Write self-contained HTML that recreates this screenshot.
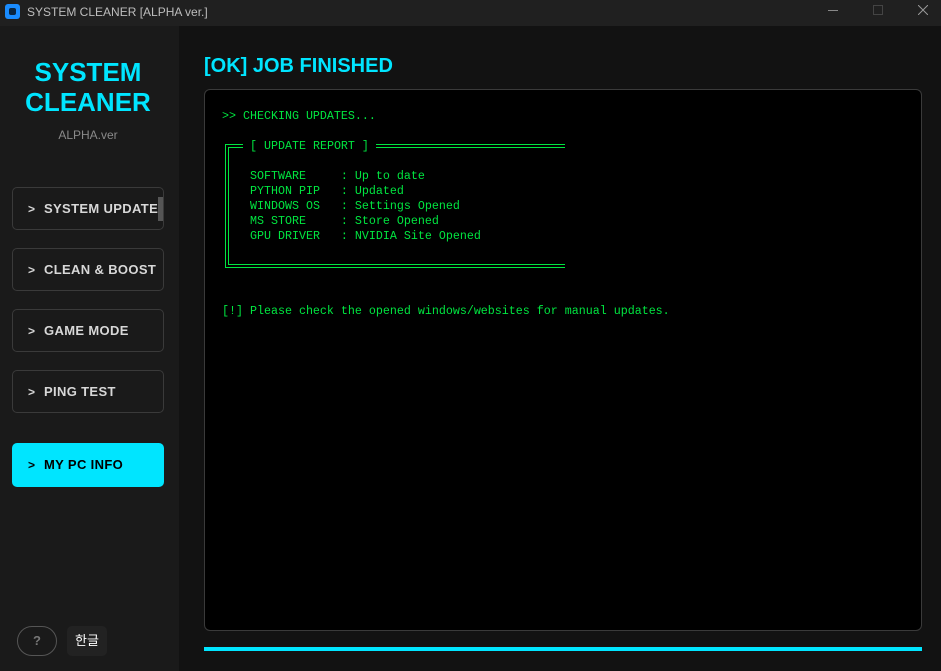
<!DOCTYPE html>
<html><head><meta charset="utf-8"><style>
*{margin:0;padding:0;box-sizing:border-box}
body{width:941px;height:671px;overflow:hidden;background:#121212;font-family:"Liberation Sans","Noto Sans CJK KR",sans-serif;position:relative}
.tb{position:absolute;left:0;top:0;width:941px;height:26px;background:#202020;color:#bdbdbd;font-size:12px}
.tb .ic{position:absolute;left:5px;top:4px;width:15px;height:15px;background:#1a8cff;border-radius:3px}
.tb .ic:after{content:"";position:absolute;left:4px;top:4px;width:7px;height:7px;background:#0a2540;border-radius:2px}
.tb .t{position:absolute;left:27px;top:5px}
.side{position:absolute;left:0;top:26px;width:179px;height:645px;background:#1a1a1a}
.logo{position:absolute;left:0;top:57px;width:176px;text-align:center;color:#00e5ff;font-weight:bold;font-size:26px;line-height:30px}
.ver{position:absolute;left:0;top:128px;width:176px;text-align:center;color:#8a8a8a;font-size:12px}
.btn{position:absolute;left:12px;width:152px;height:43px;border:1px solid #3a3a3a;border-radius:5px;color:#d8d8d8;font-weight:bold;font-size:13px;letter-spacing:0.35px;line-height:41px;padding-left:15px;white-space:nowrap;overflow:hidden}
.btn b{display:inline-block;width:16px;font-size:12px}
.act{background:#00e5ff;border-color:#00e5ff;color:#000}
h1{position:absolute;left:204px;top:55px;color:#00e5ff;font-size:20px;font-weight:bold}
.term{position:absolute;left:204px;top:89px;width:718px;height:542px;background:#000;border:1px solid #3a3a3a;border-radius:6px}
.m{position:absolute;font-family:"Liberation Mono",monospace;font-size:11.67px;color:#00e640;white-space:pre;line-height:15px}
.box{position:absolute;left:225px;top:143px;width:340px;height:124px;border:4px double #00e640;border-right:none}
.prog{position:absolute;left:204px;top:647px;width:718px;height:4px;background:#00e5ff}
</style></head><body>
<div class="tb"><div class="ic"></div><div class="t">SYSTEM CLEANER [ALPHA ver.]</div>
<div style="position:absolute;left:828px;top:10px;width:10px;height:1px;background:#888"></div>
<div style="position:absolute;left:873px;top:5px;width:10px;height:10px;border:1px solid #444"></div>
<svg style="position:absolute;left:918px;top:5px" width="10" height="10"><path d="M0 0L10 10M10 0L0 10" stroke="#999" stroke-width="1"/></svg>
</div>
<div class="side"></div>
<div class="logo">SYSTEM<br>CLEANER</div>
<div class="ver">ALPHA.ver</div>
<div class="btn" style="top:187px"><b>&gt;</b>SYSTEM UPDATE</div>
<div style="position:absolute;left:158px;top:197px;width:5px;height:24px;background:#555"></div>
<div class="btn" style="top:248px"><b>&gt;</b>CLEAN &amp; BOOST</div>
<div class="btn" style="top:309px"><b>&gt;</b>GAME MODE</div>
<div class="btn" style="top:370px"><b>&gt;</b>PING TEST</div>
<div class="btn act" style="top:443px;height:44px"><b>&gt;</b>MY PC INFO</div>
<div style="position:absolute;left:17px;top:626px;width:40px;height:30px;border:1px solid #555;border-radius:15px;color:#777;font-weight:bold;font-size:13px;text-align:center;line-height:28px">?</div>
<div style="position:absolute;left:67px;top:626px;width:40px;height:30px;background:#222;border-radius:5px;color:#fff;font-size:13px;text-align:center;line-height:30px">한글</div>
<h1>[OK] JOB FINISHED</h1>
<div class="term"></div>
<div class="m" style="left:222px;top:109px">&gt;&gt; CHECKING UPDATES...</div>
<div class="box" style="top:144px"></div>
<div class="m" style="left:243px;top:139px;background:#000;padding:0 7px">[ UPDATE REPORT ]</div>
<div class="m" style="left:250px;top:169px">SOFTWARE     : Up to date
PYTHON PIP   : Updated
WINDOWS OS   : Settings Opened
MS STORE     : Store Opened
GPU DRIVER   : NVIDIA Site Opened</div>
<div class="m" style="left:222px;top:304px">[!] Please check the opened windows/websites for manual updates.</div>
<div class="prog"></div>
</body></html>
